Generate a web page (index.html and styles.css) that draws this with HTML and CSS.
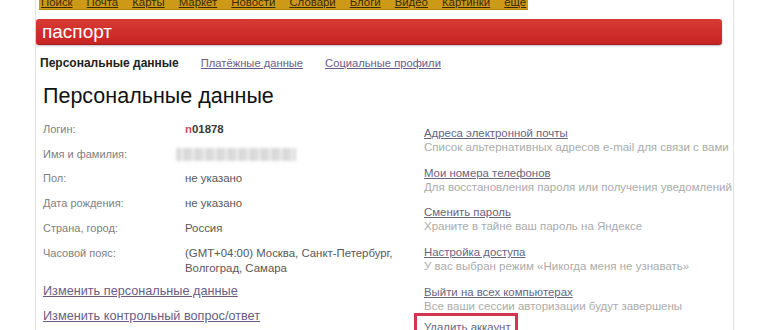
FILE: index.html
```html
<!DOCTYPE html>
<html lang="ru">
<head>
  <meta charset="UTF-8">
  <title>Паспорт</title>
  <link rel="stylesheet" href="styles.css">
</head>
<body>
  <div class="page">
    <div class="services">
      <a href="#">Поиск</a>
      <a href="#">Почта</a>
      <a href="#">Карты</a>
      <a href="#">Маркет</a>
      <a href="#">Новости</a>
      <a href="#">Словари</a>
      <a href="#">Блоги</a>
      <a href="#">Видео</a>
      <a href="#">Картинки</a>
      <a href="#">еще</a>
    </div>

    <div class="head-bar">паспорт</div>

    <div class="tabs">
      <span class="tab tab-active">Персональные данные</span>
      <a class="tab" href="#">Платёжные данные</a>
      <a class="tab" href="#">Социальные профили</a>
    </div>

    <h1 class="title">Персональные данные</h1>

    <div class="columns">
      <div class="info">
        <div class="row">
          <div class="label">Логин:</div>
          <div class="value login"><span class="login-first">n</span>01878</div>
        </div>
        <div class="row">
          <div class="label">Имя и фамилия:</div>
          <div class="value"><span class="blurred"></span></div>
        </div>
        <div class="row">
          <div class="label">Пол:</div>
          <div class="value">не указано</div>
        </div>
        <div class="row">
          <div class="label">Дата рождения:</div>
          <div class="value">не указано</div>
        </div>
        <div class="row">
          <div class="label">Страна, город:</div>
          <div class="value">Россия</div>
        </div>
        <div class="row">
          <div class="label">Часовой пояс:</div>
          <div class="value">(GMT+04:00) Москва, Санкт-Петербург,<br>Волгоград, Самара</div>
        </div>
        <div class="edit-link"><a href="#">Изменить персональные данные</a></div>
        <div class="edit-link"><a href="#">Изменить контрольный вопрос/ответ</a></div>
      </div>

      <div class="options">
        <div class="option-list">
          <div class="option">
            <a href="#">Адреса электронной почты</a>
            <div class="option-desc">Список альтернативных адресов e-mail для связи с вами</div>
          </div>
          <div class="option">
            <a href="#">Мои номера телефонов</a>
            <div class="option-desc">Для восстановления пароля или получения уведомлений</div>
          </div>
          <div class="option">
            <a href="#">Сменить пароль</a>
            <div class="option-desc">Храните в тайне ваш пароль на Яндексе</div>
          </div>
          <div class="option">
            <a href="#">Настройка доступа</a>
            <div class="option-desc">У вас выбран режим «Никогда меня не узнавать»</div>
          </div>
          <div class="option">
            <a href="#">Выйти на всех компьютерах</a>
            <div class="option-desc">Все ваши сессии авторизации будут завершены</div>
          </div>
        </div>
        <div class="delete-box"><a href="#">Удалить аккаунт</a></div>
      </div>
    </div>
  </div>
</body>
</html>
```

FILE: styles.css
```css
:root {
  --link-color: #6a5c86;
  --option-link: #66657f;
  --label-color: #808080;
  --value-color: #585858;
  --desc-color: #ababab;
  --border-color: #e2e2e2;
}
* {
  margin: 0;
  padding: 0;
  box-sizing: border-box;
}
body {
  background: #fff;
  font-family: 'Liberation Sans', Arial, sans-serif;
  font-size: 11.4px;
  overflow: hidden;
}
a {
  color: var(--link-color);
}
.page {
  margin-left: 35px;
  width: 699px;
  min-height: 330px;
  border-left: 1px solid var(--border-color);
  border-right: 1px solid var(--border-color);
}
/* top services strip */
.services {
  display: flex;
  width: fit-content;
  gap: 14px;
  margin-left: 3px;
  padding: 0 2px;
  height: 10px;
  overflow: hidden;
  background: #cd9a18;
  border-bottom: 1px solid #b7860c;
}
.services a {
  display: block;
  margin-top: -5px;
  line-height: 14px;
  font-size: 11.4px;
  color: #3b2a00;
}
.head-bar {
  margin-top: 9px;
  width: 686px;
  height: 26px;
  padding-left: 6px;
  line-height: 26px;
  font-size: 19px;
  color: #fff;
  background: linear-gradient(#d83a33, #c72525);
  border-bottom: 1px solid #a51d1d;
  border-radius: 3px;
  box-shadow: 0 1px 2px rgba(0,0,0,0.25);
}
.tabs {
  display: flex;
  gap: 22px;
  margin-top: 11px;
  padding-left: 4px;
  line-height: 15px;
}
.tab {
  font-size: 11.2px;
}
.tab-active {
  font-size: 12px;
  font-weight: bold;
  color: #222;
}
.title {
  margin-top: 12px;
  padding-left: 7px;
  font-size: 21.5px;
  line-height: 27px;
  font-weight: normal;
  color: #111;
}
.columns {
  display: flex;
  margin-top: 7px;
  padding-left: 7px;
}
.info {
  width: 371px;
}
.row {
  display: flex;
  padding: 4.9px 0;
  line-height: 15px;
}
.label {
  width: 142px;
  flex-shrink: 0;
  font-size: 11px;
  color: var(--label-color);
}
.value {
  color: var(--value-color);
}
.login {
  font-weight: bold;
  color: #3a3a3a;
}
.login-first {
  color: #c4506c;
}
.blurred {
  display: inline-block;
  width: 120px;
  height: 13px;
  margin-left: -9px;
  vertical-align: middle;
  background: repeating-linear-gradient(90deg, #dcdcdc 0 5px, #ececec 5px 8px, #d6d6d6 8px 11px);
  filter: blur(1.5px);
}
.edit-link {
  padding: 3.5px 0 6px;
  line-height: 15px;
  font-size: 12.7px;
}
.options {
  margin-top: 9px;
  flex: 1;
  min-width: 0;
}
.option-list {
  display: flex;
  flex-direction: column;
  gap: 11.7px;
  padding-left: 10px;
}
.option {
  line-height: 14px;
  white-space: nowrap;
  overflow: hidden;
}
.option a {
  color: var(--option-link);
}
.option-desc {
  font-size: 11.5px;
  color: var(--desc-color);
}
.delete-box {
  width: 104px;
  padding: 4px 7px 10px;
  border: 3px solid #d2354d;
  white-space: nowrap;
  overflow: hidden;
  line-height: 14px;
}
.delete-box a {
  color: var(--option-link);
}
```
